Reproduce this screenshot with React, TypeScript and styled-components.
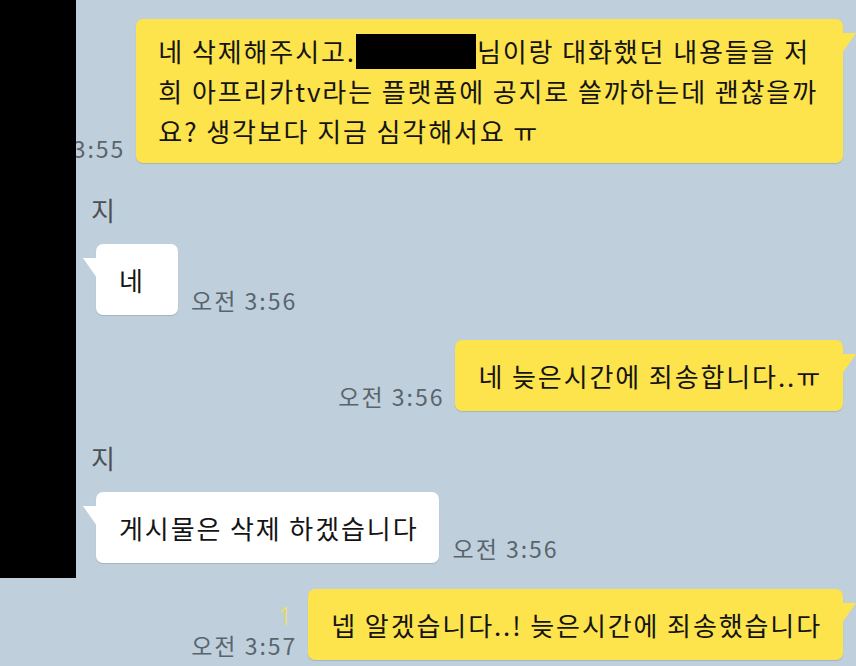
import React from "react";
import styled, { createGlobalStyle, css } from "styled-components";

const GlobalStyle = createGlobalStyle`
  html, body {
    margin: 0;
    padding: 0;
    background: #bfd0dc;
  }
  body {
    font-family: "Noto Sans CJK KR", "Noto Sans", sans-serif;
  }
`;

type Side = "me" | "them";

const Screen = styled.div`
  position: relative;
  width: 856px;
  height: 666px;
  overflow: hidden;
  background: #bfd0dc;
`;

const Feed = styled.div`
  display: flex;
  flex-direction: column;
  padding-top: 19px;
`;

const Row = styled.div<{ $side: Side; $top: number }>`
  display: flex;
  align-items: flex-end;
  gap: 13px;
  margin-top: ${(p) => p.$top}px;
  ${(p) =>
    p.$side === "me"
      ? css`
          justify-content: flex-end;
          padding-right: 13px;
        `
      : css`
          justify-content: flex-start;
          padding-left: 96px;
        `}
`;

const Name = styled.div<{ $top: number }>`
  margin-top: ${(p) => p.$top}px;
  padding-left: 91px;
  font-size: 26px;
  line-height: 30px;
  color: #4b5056;
`;

const Meta = styled.div<{ $side: Side }>`
  display: flex;
  flex-direction: column;
  align-items: ${(p) => (p.$side === "me" ? "flex-end" : "flex-start")};
  padding-bottom: 2px;
`;

const Unread = styled.span`
  font-family: "Noto Sans", sans-serif;
  font-size: 25px;
  font-weight: 300;
  line-height: 26px;
  color: #f3df55;
  margin-right: 3px;
  margin-bottom: 4px;
`;

const Time = styled.span`
  font-size: 23px;
  line-height: 26px;
  color: #5a646d;
  white-space: nowrap;
  letter-spacing: 2px;
  margin-right: -2px;
`;

const Bubble = styled.div<{ $side: Side }>`
  position: relative;
  box-sizing: border-box;
  min-width: 82px;
  padding: 15px 21px 15px 23px;
  border-radius: 7px;
  font-size: 26px;
  line-height: 41px;
  letter-spacing: 1.9px;
  color: #141414;
  white-space: nowrap;
  background: ${(p) => (p.$side === "me" ? "#fde34c" : "#ffffff")};
  box-shadow: 0 1px 1px rgba(60, 80, 100, 0.22);

  &::after {
    content: "";
    position: absolute;
    top: 14px;
    width: 14px;
    height: 20px;
    background: ${(p) => (p.$side === "me" ? "#fde34c" : "#ffffff")};
    ${(p) =>
      p.$side === "me"
        ? css`
            right: -13px;
            clip-path: polygon(0 0, 100% 0, 0 100%);
          `
        : css`
            left: -13px;
            clip-path: polygon(0 0, 100% 0, 100% 100%);
          `}
  }
`;

const LongBubble = styled(Bubble)`
  padding: 12px 25px 12px 22px;
  line-height: 40px;
`;

const Redact = styled.span`
  display: inline-block;
  width: 120px;
  height: 35px;
  background: #000;
  vertical-align: -7px;
  margin-right: 1px;
`;

const CensorBar = styled.div`
  position: absolute;
  left: 0;
  top: 0;
  width: 76px;
  height: 578px;
  background: #000;
`;

export default function App() {
  return (
    <>
      <GlobalStyle />
      <Screen>
        <Feed>
          <Row $side="me" $top={0}>
            <Meta $side="me">
              <Time>오전 3:55</Time>
            </Meta>
            <LongBubble $side="me">
              네 삭제해주시고.<Redact />님이랑 대화했던 내용들을 저
              <br />
              희 아프리카tv라는 플랫폼에 공지로 쓸까하는데 괜찮을까
              <br />
              요? 생각보다 지금 심각해서요 ㅠ
            </LongBubble>
          </Row>

          <Name $top={32}>지</Name>
          <Row $side="them" $top={19}>
            <Bubble $side="them">네</Bubble>
            <Meta $side="them">
              <Time>오전 3:56</Time>
            </Meta>
          </Row>

          <Row $side="me" $top={25}>
            <Meta $side="me">
              <Time>오전 3:56</Time>
            </Meta>
            <Bubble $side="me">네 늦은시간에 죄송합니다..ㅠ</Bubble>
          </Row>

          <Name $top={32}>지</Name>
          <Row $side="them" $top={19}>
            <Bubble $side="them">게시물은 삭제 하겠습니다</Bubble>
            <Meta $side="them">
              <Time>오전 3:56</Time>
            </Meta>
          </Row>

          <Row $side="me" $top={26}>
            <Meta $side="me">
              <Unread>1</Unread>
              <Time>오전 3:57</Time>
            </Meta>
            <Bubble $side="me">넵 알겠습니다..! 늦은시간에 죄송했습니다</Bubble>
          </Row>
        </Feed>
        <CensorBar />
      </Screen>
    </>
  );
}
